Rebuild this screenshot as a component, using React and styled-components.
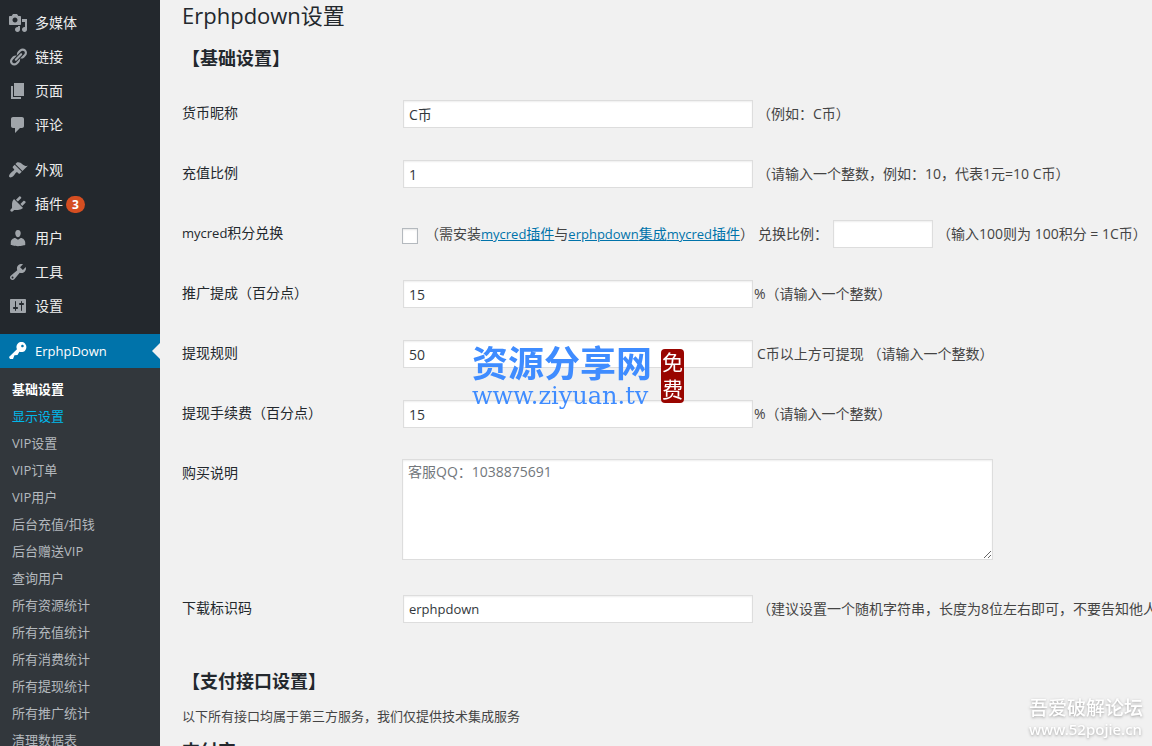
import React from "react";
import styled, { createGlobalStyle } from "styled-components";

const GlobalStyle = createGlobalStyle`
    * {
        box-sizing: border-box;
    }
    body {
        margin: 0;
        background: #f1f1f1;
        color: #444;
        font-family: "Open Sans", "Noto Sans CJK SC", sans-serif;
        font-size: 14px;
        line-height: 20px;
    }
    input, textarea {
        font-family: inherit;
        font-size: 14px;
    }
`

const Page = styled.div`
    display: flex;
    height: 100vh;
    overflow: hidden;
`
const Sidebar = styled.nav`
    flex: 0 0 160px;
    background: #23282d;
    padding-top: 6px;
`
const MenuList = styled.ul`
    list-style: none;
    margin: 0 0 11px;
    padding: 0;
`
const MenuLink = styled.a`
    position: relative;
    display: flex;
    align-items: center;
    height: 34px;
    padding-left: 8px;
    gap: 7px;
    color: ${(props) => (props.$active ? "#fff" : "#eee")};
    background: ${(props) => (props.$active ? "#0073aa" : "transparent")};
    text-decoration: none;
    svg {
        width: 20px;
        height: 20px;
        fill: ${(props) => (props.$active ? "#fff" : "#a0a5aa")};
    }
`
const MenuText = styled.span`
    display: flex;
    align-items: center;
    gap: 3px;
`
const Latin = styled.span`
    font-size: 13px;
`
const Arrow = styled.span`
    position: absolute;
    right: 0;
    top: 9px;
    border: 8px solid transparent;
    border-left-width: 0;
    border-right-color: #f1f1f1;
`
const Count = styled.span`
    width: 19px;
    height: 17px;
    border-radius: 10px;
    background: #d54e21;
    color: #fff;
    font-size: 12px;
    font-weight: 700;
    line-height: 17px;
    text-align: center;
`
const SubMenu = styled.ul`
    list-style: none;
    margin: 0;
    padding: 8px 0;
    background: #32373c;
`
const SubLink = styled.a`
    display: block;
    padding: 0 12px;
    font-size: 13px;
    line-height: 27px;
    text-decoration: none;
    color: ${(props) => (props.$hover ? "#00b9eb" : props.$current ? "#fff" : "#b4b9be")};
    font-weight: ${(props) => (props.$current ? 700 : 400)};
`

const Content = styled.main`
    flex: 1;
    min-width: 0;
    padding-left: 22px;
    overflow: hidden;
`
const Title = styled.h1`
    margin: 0;
    color: #23282d;
    font-size: 22px;
    font-weight: 400;
    line-height: 31px;
`
const SectionTitle = styled.h2`
    margin: ${(props) => (props.$first ? "15px 0 13px" : "30px 0 12px")};
    color: #23282d;
    font-size: 18px;
    font-weight: 700;
    line-height: 25px;
`
const FormTable = styled.table`
    width: 100%;
    table-layout: fixed;
    border-collapse: collapse;
    th {
        width: 220px;
        padding: 20px 10px 20px 0;
        color: #23282d;
        font-weight: 400;
        line-height: 18px;
        text-align: left;
        vertical-align: top;
        white-space: nowrap;
    }
    td {
        padding: 15px 0;
    }
`
const Field = styled.div`
    display: flex;
    align-items: center;
    gap: ${(props) => props.$gap || 4}px;
    min-height: 30px;
    white-space: nowrap;
    a {
        color: #0073aa;
        font-size: 14px;
    }
`
const TextInput = styled.input`
    flex: 0 0 auto;
    width: ${(props) => (props.$small ? 100 : 350)}px;
    height: 28px;
    margin: 1px;
    margin-right: 0;
    padding: 3px 5px;
    border: 1px solid #ddd;
    background: #fff;
    color: #32373c;
    font-size: ${(props) => (props.$latin ? 13 : 14)}px;
    box-shadow: inset 0 1px 2px rgba(0, 0, 0, 0.07);
`
const CheckBox = styled.input`
    appearance: none;
    flex: 0 0 auto;
    width: 16px;
    height: 16px;
    margin: 4px 3px 0 0;
    border: 1px solid #b4b9be;
    background: #fff;
    box-shadow: inset 0 1px 2px rgba(0, 0, 0, 0.1);
`
const TextArea = styled.textarea`
    display: block;
    width: 591px;
    height: 101px;
    margin-bottom: 4px;
    padding: 2px 5px;
    border: 1px solid #ddd;
    background: #fff;
    line-height: 20px;
    box-shadow: inset 0 1px 2px rgba(0, 0, 0, 0.07);
    &::placeholder {
        color: #72777c;
    }
`
const Note = styled.p`
    margin: 0 0 12px;
    font-size: 13px;
    line-height: 20px;
`
const SubTitle = styled.h3`
    margin: 0;
    color: #23282d;
    font-size: 18px;
    line-height: 26px;
`

const SiteMark = styled.div`
    position: fixed;
    left: 472px;
    top: 345px;
    display: flex;
    align-items: center;
    gap: 9px;
    color: #3f8cff;
    pointer-events: none;
`
const SiteName = styled.div`
    font-size: 36px;
    font-weight: 700;
    line-height: 38px;
`
const SiteUrl = styled.div`
    font-family: "DejaVu Serif", serif;
    font-size: 24px;
    line-height: 26px;
`
const Seal = styled.div`
    width: 23px;
    margin-bottom: 2px;
    border-radius: 4px;
    background: #990500;
    color: #fff;
    font-size: 21px;
    line-height: 27px;
    text-align: center;
    span {
        display: block;
    }
`
const ForumMark = styled.div`
    position: fixed;
    right: 9px;
    bottom: 7px;
    color: #fff;
    font-size: 19px;
    font-weight: 500;
    line-height: 22px;
    text-shadow: 0 1px 3px rgba(0, 0, 0, 0.35);
    pointer-events: none;
    div + div {
        font-family: "Noto Sans", sans-serif;
        font-size: 15px;
        line-height: 20px;
    }
`

const icons = {
    media: "M13 11V4c0-.55-.45-1-1-1h-1.67L9 1H5L3.67 3H2c-.55 0-1 .45-1 1v7c0 .55.45 1 1 1h10c.55 0 1-.45 1-1zM7 4.5c1.38 0 2.5 1.12 2.5 2.5S8.38 9.5 7 9.5 4.5 8.38 4.5 7 5.62 4.5 7 4.5zM14 6h5v10.5c0 1.38-1.12 2.5-2.5 2.5S14 17.88 14 16.5s1.12-2.5 2.5-2.5c.17 0 .34.02.5.05V9h-3V6zm-4 8.05V13h2v3.5c0 1.38-1.12 2.5-2.5 2.5S7 17.88 7 16.5 8.12 14 9.5 14c.17 0 .34.02.5.05z",
    link: "M17.74 2.76c1.68 1.69 1.68 4.41 0 6.1l-1.53 1.52c-1.12 1.12-2.7 1.47-4.14 1.09l2.62-2.61.76-.77.76-.76c.84-.84.84-2.2 0-3.04-.84-.85-2.2-.85-3.04 0l-.77.76-3.38 3.38c-.37-1.44-.02-3.02 1.1-4.14l1.52-1.53c1.69-1.68 4.42-1.68 6.1 0zM8.59 13.43l5.34-5.34c.42-.42.42-1.1 0-1.52-.44-.43-1.13-.39-1.53 0l-5.33 5.34c-.42.42-.42 1.1 0 1.52.44.43 1.13.39 1.52 0zm-.76 2.29l4.14-4.15c.38 1.44.03 3.02-1.09 4.14l-1.52 1.53c-1.69 1.68-4.41 1.68-6.1 0-1.68-1.68-1.68-4.42 0-6.1l1.53-1.52c1.12-1.12 2.7-1.47 4.14-1.1l-4.14 4.15c-.85.84-.85 2.2 0 3.05.84.84 2.2.84 3.04 0z",
    page: "M6 15V2h10v13H6zm-1 1h8v2H3V5h2v11z",
    comment: "M5 2h9c1.1 0 2 .9 2 2v7c0 1.1-.9 2-2 2h-2l-5 5v-5H5c-1.1 0-2-.9-2-2V4c0-1.1.9-2 2-2z",
    appearance: "M14.48 11.06L7.41 3.99l1.5-1.5c.5-.56 2.3-.47 3.51.32 1.21.8 1.43 1.28 2.91 2.1 1.18.64 2.45 1.26 4.45.85zm-.71.71L6.7 4.7 4.93 6.47c-.39.39-.39 1.02 0 1.41l1.06 1.06c.39.39.39 1.03 0 1.42-.6.6-1.43 1.11-2.21 1.69-.35.26-.7.53-1.01.84C1.43 14.23.4 16.08 1.4 17.07c.99 1 2.84-.03 4.18-1.36.31-.31.58-.66.85-1.02.57-.78 1.08-1.61 1.69-2.21.39-.39 1.02-.39 1.41 0l1.06 1.06c.39.39 1.02.39 1.41 0z",
    plugin: "M13.11 4.36L9.87 7.6 8 5.73l3.24-3.24c.35-.34 1.05-.2 1.56.32.52.51.66 1.21.31 1.55zm-8 1.77l.91-1.12 9.01 9.01-1.19.84c-.71.71-2.63 1.16-3.82 1.16H6.14L4.9 17.26c-.59.59-1.54.59-2.12 0-.59-.58-.59-1.53 0-2.12l1.24-1.24v-3.88c0-1.13.4-3.19 1.09-3.89zm7.26 3.97l3.24-3.24c.34-.35 1.04-.21 1.55.31.52.51.66 1.21.31 1.55l-3.24 3.25z",
    user: "M10 9.25c-2.27 0-2.73-3.44-2.73-3.44C7 4.02 7.82 2 9.97 2c2.16 0 2.98 2.02 2.71 3.81 0 0-.41 3.44-2.68 3.44zm0 2.57L12.72 10c2.39 0 4.52 2.33 4.52 4.53v2.49s-3.65 1.13-7.24 1.13c-3.65 0-7.24-1.13-7.24-1.13v-2.49c0-2.25 1.94-4.48 4.47-4.48z",
    tools: "M16.68 9.77c-1.34 1.34-3.3 1.67-4.95.99l-5.41 6.52c-.99.99-2.59.99-3.58 0s-.99-2.59 0-3.57l6.52-5.42c-.68-1.65-.35-3.61.99-4.95 1.28-1.28 3.12-1.62 4.72-1.06l-2.89 2.89 2.82 2.82 2.86-2.87c.53 1.58.18 3.39-1.08 4.65zM3.81 16.21c.4.39 1.04.39 1.43 0 .4-.4.4-1.04 0-1.43-.39-.4-1.03-.4-1.43 0-.39.39-.39 1.03 0 1.43z",
    settings: "M18 16V4c0-.55-.45-1-1-1H3c-.55 0-1 .45-1 1v12c0 .55.45 1 1 1h14c.55 0 1-.45 1-1zM8 11h1c.55 0 1 .45 1 1s-.45 1-1 1H8v1.5c0 .28-.22.5-.5.5s-.5-.22-.5-.5V13H6c-.55 0-1-.45-1-1s.45-1 1-1h1V5.5c0-.28.22-.5.5-.5s.5.22.5.5V11zm5-2h-1c-.55 0-1-.45-1-1s.45-1 1-1h1V5.5c0-.28.22-.5.5-.5s.5.22.5.5V7h1c.55 0 1 .45 1 1s-.45 1-1 1h-1v5.5c0 .28-.22.5-.5.5s-.5-.22-.5-.5V9z",
    key: "M16.95 2.58c1.96 1.95 1.96 5.12 0 7.07-1.51 1.51-3.75 1.84-5.59 1.01l-1.87 3.31-2.99.31L5 18H2l-1-2 7.95-7.69c-.92-1.87-.62-4.18.93-5.73 1.95-1.96 5.12-1.96 7.07 0zm-2.51 3.79c.74 0 1.33-.6 1.33-1.34 0-.73-.59-1.33-1.33-1.33-.73 0-1.33.6-1.33 1.33 0 .74.6 1.34 1.33 1.34z",
}

const contentMenu = [
    { icon: "media", text: "多媒体" },
    { icon: "link", text: "链接" },
    { icon: "page", text: "页面" },
    { icon: "comment", text: "评论" },
]
const adminMenu = [
    { icon: "appearance", text: "外观" },
    { icon: "plugin", text: "插件", count: 3 },
    { icon: "user", text: "用户" },
    { icon: "tools", text: "工具" },
    { icon: "settings", text: "设置" },
]
const subMenu = [
    "基础设置", "显示设置", "VIP设置", "VIP订单", "VIP用户", "后台充值/扣钱", "后台赠送VIP",
    "查询用户", "所有资源统计", "所有充值统计", "所有消费统计", "所有提现统计", "所有推广统计", "清理数据表",
]

function Icon({ name }) {
    return (
        <svg viewBox="0 0 20 20" aria-hidden="true">
            <path fillRule="evenodd" d={icons[name]} />
        </svg>
    )
}

function Menu({ items }) {
    return (
        <MenuList>
            {items.map((item) => (
                <li key={item.text}>
                    <MenuLink href="#">
                        <Icon name={item.icon} />
                        <MenuText>
                            {item.text}
                            {item.count && <Count>{item.count}</Count>}
                        </MenuText>
                    </MenuLink>
                </li>
            ))}
        </MenuList>
    )
}

function Row({ id, label, children }) {
    return (
        <tr>
            <th scope="row"><label htmlFor={id}>{label}</label></th>
            <td>{children}</td>
        </tr>
    )
}

function App() {
    return (
        <Page>
            <GlobalStyle />
            <Sidebar>
                <Menu items={contentMenu} />
                <Menu items={adminMenu} />
                <MenuLink href="#" $active>
                    <Icon name="key" />
                    <MenuText><Latin>ErphpDown</Latin></MenuText>
                    <Arrow />
                </MenuLink>
                <SubMenu>
                    {subMenu.map((text, i) => (
                        <li key={text}>
                            <SubLink href="#" $current={i === 0} $hover={i === 1}>{text}</SubLink>
                        </li>
                    ))}
                </SubMenu>
            </Sidebar>
            <Content>
                <Title>Erphpdown设置</Title>
                <SectionTitle $first>【基础设置】</SectionTitle>
                <FormTable>
                    <tbody>
                        <Row id="name" label="货币昵称">
                            <Field>
                                <TextInput id="name" defaultValue="C币" />
                                <span>（例如：C币）</span>
                            </Field>
                        </Row>
                        <Row id="ratio" label="充值比例">
                            <Field>
                                <TextInput id="ratio" defaultValue="1" />
                                <span>（请输入一个整数，例如：10，代表1元=10 C币）</span>
                            </Field>
                        </Row>
                        <Row id="mycred" label={<><Latin>mycred</Latin>积分兑换</>}>
                            <Field>
                                <CheckBox id="mycred" type="checkbox" />
                                <span>
                                    （需安装<a href="#"><Latin>mycred</Latin>插件</a>与<a href="#"><Latin>erphpdown</Latin>集成<Latin>mycred</Latin>插件</a>）
                                </span>
                                <label htmlFor="exchange">兑换比例：</label>
                                <TextInput id="exchange" $small />
                                <span>（输入100则为 100积分 = 1C币）</span>
                            </Field>
                        </Row>
                        <Row id="ali" label="推广提成（百分点）">
                            <Field $gap={1}>
                                <TextInput id="ali" defaultValue="15" />
                                <span>%（请输入一个整数）</span>
                            </Field>
                        </Row>
                        <Row id="limit" label="提现规则">
                            <Field>
                                <TextInput id="limit" defaultValue="50" />
                                <span>C币以上方可提现 （请输入一个整数）</span>
                            </Field>
                        </Row>
                        <Row id="fee" label="提现手续费（百分点）">
                            <Field $gap={1}>
                                <TextInput id="fee" defaultValue="15" />
                                <span>%（请输入一个整数）</span>
                            </Field>
                        </Row>
                        <Row id="tips" label="购买说明">
                            <TextArea id="tips" placeholder="客服QQ：1038875691" />
                        </Row>
                        <Row id="code" label="下载标识码">
                            <Field>
                                <TextInput id="code" defaultValue="erphpdown" $latin />
                                <span>（建议设置一个随机字符串，长度为8位左右即可，不要告知他人）</span>
                            </Field>
                        </Row>
                    </tbody>
                </FormTable>
                <SectionTitle>【支付接口设置】</SectionTitle>
                <Note>以下所有接口均属于第三方服务，我们仅提供技术集成服务</Note>
                <SubTitle>支付宝</SubTitle>
            </Content>
            <SiteMark>
                <div>
                    <SiteName>资源分享网</SiteName>
                    <SiteUrl>www.ziyuan.tv</SiteUrl>
                </div>
                <Seal>
                    <span>免</span>
                    <span>费</span>
                </Seal>
            </SiteMark>
            <ForumMark>
                <div>吾爱破解论坛</div>
                <div>www.52pojie.cn</div>
            </ForumMark>
        </Page>
    )
}

export default App;
